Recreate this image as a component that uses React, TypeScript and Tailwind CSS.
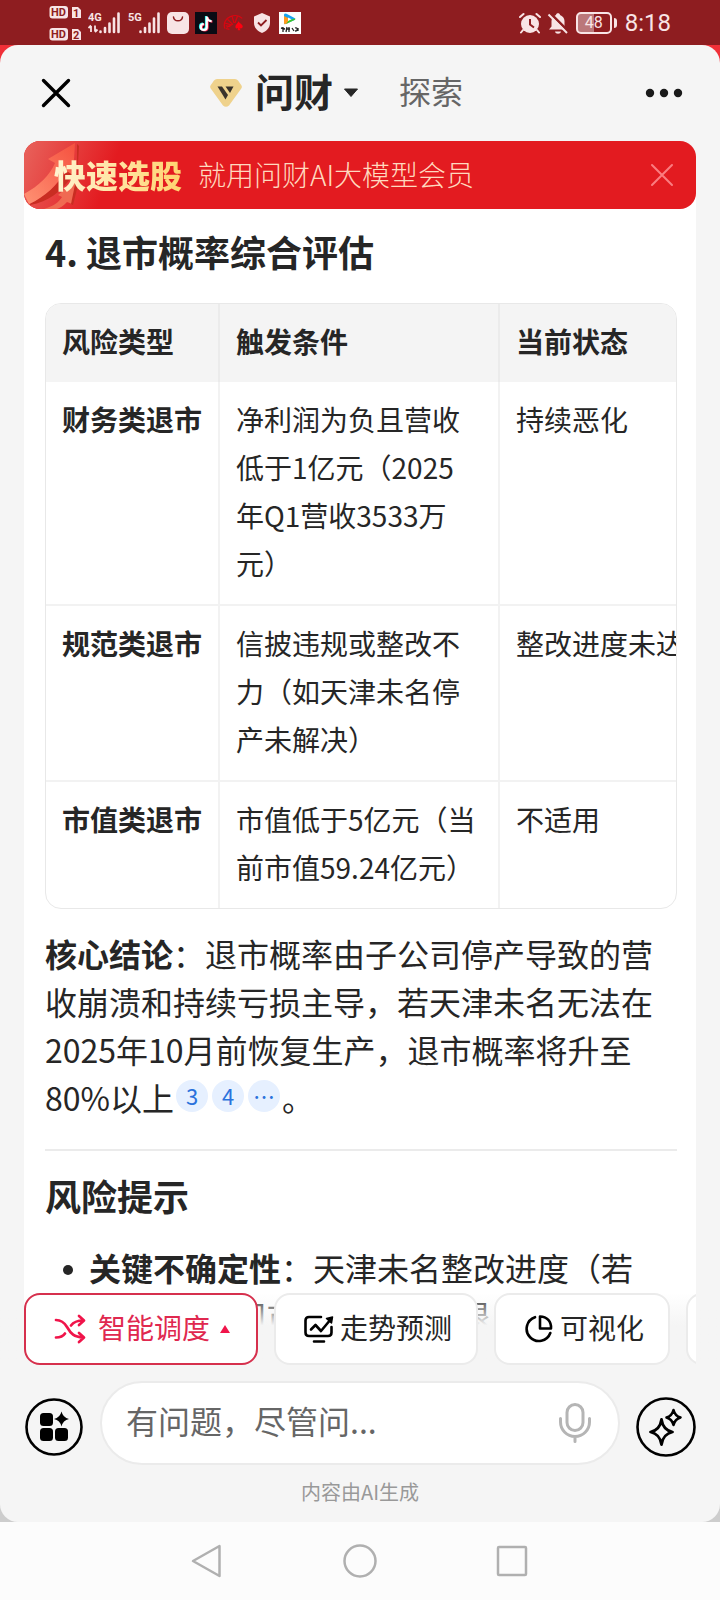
import type { ReactNode } from "react";

const RISK_ROWS = [
  {
    type: "财务类退市",
    condition: "净利润为负且营收低于1亿元（2025年Q1营收3533万元）",
    status: "持续恶化",
  },
  {
    type: "规范类退市",
    condition: "信披违规或整改不力（如天津未名停产未解决）",
    status: "整改进度未达标",
  },
  {
    type: "市值类退市",
    condition: "市值低于5亿元（当前市值59.24亿元）",
    status: "不适用",
  },
];

const CITATIONS = ["3", "4", "…"];

function Signal({ label, data }: { label: string; data?: boolean }) {
  return (
    <svg width="33" height="24" viewBox="0 0 33 24" fill="#f8e4e5" aria-hidden="true">
      <text x="0" y="10" fontSize="11" fontWeight="700" fontFamily="Roboto, sans-serif">
        {label}
      </text>
      {data && (
        <path
          d="M3 21v-6M3 14.500l-2.500 2.500M7 14.500v6M7 21l2.500-2.500"
          stroke="#f8e4e5"
          strokeWidth="1.800"
          fill="none"
        />
      )}
      <g stroke="#f8e4e5" strokeWidth="2.600" strokeLinecap="round">
        <path d="M12.500 20.500v.5M17 17v4M21.500 12.500v8.500M26 7.500v13.500M30.500 2.500v18.500" />
      </g>
    </svg>
  );
}

function StatusBar() {
  return (
    <div className="flex h-[45px] items-center justify-between bg-[#8e1d20] px-[49px] text-[#f8e4e5]">
      <div className="flex items-center">
        <svg width="33" height="36" viewBox="0 0 33 36" aria-hidden="true">
          <g fill="#f8e4e5">
            <rect x="0.500" y="1" width="18.500" height="12.500" rx="3" />
            <path d="M23 2h6l3 3v8h-9z" />
            <rect x="0.500" y="23" width="18.500" height="12.500" rx="3" />
            <path d="M23 24h6l3 3v8h-9z" />
          </g>
          <g fill="#8e1d20" fontFamily="Roboto, sans-serif" fontWeight="700" fontSize="11">
            <text x="2" y="11">HD</text>
            <text x="24" y="11.500">1</text>
            <text x="2" y="33">HD</text>
            <text x="24" y="33.500">2</text>
          </g>
        </svg>
        <div className="ml-[6px] flex items-center gap-[7px]">
          <Signal label="4G" data />
          <Signal label="5G" />
        </div>
        <div className="ml-[6px] flex items-center gap-[6px]">
          <svg width="22" height="22" viewBox="0 0 22 22" aria-hidden="true">
            <rect width="22" height="22" rx="5" fill="#f8e4e5" />
            <path d="M6.500 5c.5 5 8.500 5 9 0" stroke="#8e1d20" strokeWidth="1.500" fill="none" strokeLinecap="round" />
          </svg>
          <svg width="22" height="22" viewBox="0 0 22 22" fill="none" aria-hidden="true">
            <rect width="22" height="22" fill="#0a0b14" />
            <g strokeWidth="2.200">
              <path d="M11 4v10.500a3 3 0 1 1-3-3M11 4c.3 2.800 2 4.500 4.800 4.700" stroke="#25f4ee" />
              <path d="M12.600 5v10.500a3 3 0 1 1-3-3M12.600 5c.3 2.800 2 4.500 4.800 4.700" stroke="#fe2c55" />
              <path d="M11.800 4.500V15a3 3 0 1 1-3-3M11.800 4.500c.3 2.800 2 4.500 4.800 4.700" stroke="#fff" />
            </g>
          </svg>
          <svg width="22" height="20" viewBox="0 0 24 20" fill="none" aria-hidden="true">
            <path
              d="M2 16C0 10 3 5 8 3c5-2 10-1 13 2M4 15l7-4M2 10l7 2M5 6l5 5M10 3l2 7M16 2l-3 8M3 13l5 1M7 17l-4-1"
              stroke="#dc0510"
              strokeWidth="1.300"
            />
            <path d="M17 8c-1 2.500-3.500 3.500-3.500 6 0 1.800 1.800 2.600 3 1.300L16 18h3l-1-2.700c1.700 1.300 3.500.2 3.500-1.500 0-2.500-3.500-3.300-4.500-5.800z" fill="#ff0010" />
          </svg>
          <svg width="18" height="22" viewBox="0 0 18 22" fill="none" className="ml-[2px]" aria-hidden="true">
            <path d="M9 1l8 3.500V11c0 5-4 8.500-8 10-4-1.500-8-5-8-10V4.500z" fill="#f8e4e5" />
            <path d="M5 10.500l3 3 5.500-5.500" stroke="#8e1d20" strokeWidth="1.800" />
          </svg>
          <svg width="22" height="22" viewBox="0 0 22 22" className="ml-[2px]" aria-hidden="true">
            <rect width="22" height="22" fill="#fff" />
            <path d="M6 1.500q-1 0-1 1.500v8q0 1.500 1.500 1l9-4q1.500-1 0-2l-8-4.300z" fill="#18a4f2" />
            <path d="M5 4v7q0 1.500 1.500 1L9 11V6z" fill="#ff9a1f" />
            <path d="M7 12l8.500-4q1-.5.8-1.500L10 8z" fill="#3ec62c" />
            <path d="M9 5.500l3.500 1.700L9 9z" fill="#fff" />
            <path d="M2 16l4 1M4 15v5M8 15l-1 5M8 17h3M10 15v5M13 16l2 3M16 16c3-1 3 3 0 3M19 16v3" stroke="#222" strokeWidth="1.300" fill="none" />
          </svg>
        </div>
      </div>

      <div className="flex items-center">
        <svg width="22" height="22" viewBox="0 0 22 22" fill="none" aria-hidden="true">
          <circle cx="11" cy="12" r="9" fill="#f8e4e5" />
          <path d="M11 7v5.500l4 3" stroke="#8e1d20" strokeWidth="2" />
          <path d="M1 5l3.500-3M21 5l-3.500-3M4 18l-2 2.500M18 18l2 2.500" stroke="#f8e4e5" strokeWidth="2" strokeLinecap="round" />
        </svg>
        <svg width="22" height="22" viewBox="0 0 22 22" fill="none" className="ml-[6px]" aria-hidden="true">
          <path d="M2 17.500h18l-2.500-3V9c0-3-2-5-4.500-6 0-2.500-4-2.500-4 0C6.500 4 4.500 6 4.500 9v5.500z" fill="#f8e4e5" />
          <path d="M8 19.500h6c-.5 3-5.500 3-6 0z" fill="#f8e4e5" />
          <path d="M3 1l18 18" stroke="#8e1d20" strokeWidth="2.500" />
          <path d="M1.500 2.500L20 21" stroke="#f8e4e5" strokeWidth="2" />
        </svg>
        <div className="ml-[7px] flex h-[22px] w-[36px] items-center justify-center rounded-[5px] border-2 border-[#f8e4e5] bg-linear-to-r from-[#bb777a] from-50% to-[#8e1d20] to-50% font-[Roboto,sans-serif] text-[16px] leading-4">
          48
        </div>
        <span className="ml-[2px] h-[10px] w-[3px] rounded-r bg-[#f8e4e5]" />
        <time className="ml-[8px] font-[Roboto,sans-serif] text-[24px] leading-none">8:18</time>
      </div>
    </div>
  );
}

function Header() {
  return (
    <header className="flex h-24 items-center justify-between pr-9 pl-10">
      <button type="button" aria-label="关闭" className="flex w-20 items-center">
        <svg width="32" height="32" viewBox="0 0 32 32" fill="none" stroke="#000" strokeWidth="3.400" strokeLinecap="round">
          <path d="M3.500 3.500l25 25M28.500 3.500l-25 25" />
        </svg>
      </button>
      <nav className="flex items-center">
        <button type="button" className="flex items-center text-[39px] leading-[48px] font-bold text-[#262626]">
          <svg width="34" height="30" viewBox="0 0 34 30" className="mr-3" aria-hidden="true">
            <path d="M8 1h18q2 0 3 1.500l3.500 5q1 1.500-.2 3L20 27.500q-3 2.500-6 0L1.700 10.500q-1.200-1.500-.2-3L5 2.500Q6 1 8 1z" fill="#efd28c" />
            <path d="M8.500 8.500h4.500l6 8.500-2.500 4.500z" fill="#3a332b" />
            <path d="M16.500 8.500h8l-3.500 6.500z" fill="#3a332b" />
          </svg>
          <span className="pb-[6px]">问财</span>
          <svg width="16" height="10" viewBox="0 0 16 10" className="ml-[10px]" aria-hidden="true">
            <path d="M1.500 1h13L8 8.500z" fill="#262626" stroke="#262626" strokeLinejoin="round" />
          </svg>
        </button>
        <button type="button" className="ml-10 pb-[6px] text-[32px] leading-[48px] text-[#666]">
          探索
        </button>
      </nav>
      <button type="button" aria-label="更多" className="flex w-33 justify-end">
        <svg width="44" height="12" viewBox="0 0 44 12" fill="#1a1a1a">
          <circle cx="10" cy="6" r="4.200" />
          <circle cx="24" cy="6" r="4.200" />
          <circle cx="38" cy="6" r="4.200" />
        </svg>
      </button>
    </header>
  );
}

function Banner() {
  return (
    <div className="mx-6 bg-linear-to-b from-[#f5f5f5] from-50% to-white to-50%">
      <div className="relative flex h-17 items-center overflow-hidden rounded-2xl bg-[#e31b20] pr-[22px] pl-[30px]">
        <svg width="110" height="68" viewBox="0 0 110 68" className="absolute top-0 left-0" aria-hidden="true">
          <defs>
            <linearGradient id="glow" x1="0" y1="0" x2="0.850" y2="0.200">
              <stop offset="0" stopColor="#e8635c" />
              <stop offset="1" stopColor="#e31b20" />
            </linearGradient>
            <linearGradient id="arrow" x1="0" y1="1" x2="1" y2="0">
              <stop offset="0" stopColor="#ff9274" />
              <stop offset="1" stopColor="#f5513f" />
            </linearGradient>
          </defs>
          <rect width="110" height="68" fill="url(#glow)" />
          <path d="M6 63C25 52 38 40 44 26l9 8V3l2 2-2 36-6-4C37 50 25 61 6 64z" fill="#c92d22" />
          <path d="M0 53c15-8 26-19 31-31l-7-4L51 2l-2 32-8-5C34 44 21 56 5 63z" fill="url(#arrow)" />
          <path d="M20 68c10-3 15-7 18-12l-4-2 18-15-4 24-5-2c-4 4-7 6-10 7z" fill="#f06a52" />
          <path d="M52 39l3 1-6 24-2-1z" fill="#c92d22" />
        </svg>
        <strong className="relative bg-linear-to-r from-[#fff3cf] to-[#ffd36e] bg-clip-text pb-[2px] text-[32px] leading-[48px] font-black text-transparent">
          快速选股
        </strong>
        <span className="ml-4 flex-1 pb-[2px] text-[28px] leading-[48px] font-light text-[#ffd9bf]">就用问财AI大模型会员</span>
        <button type="button" aria-label="关闭横幅">
          <svg width="24" height="24" viewBox="0 0 24 24" fill="none" stroke="#fb7d80" strokeWidth="2" strokeLinecap="round">
            <path d="M2 2l20 20M22 2L2 22" />
          </svg>
        </button>
      </div>
    </div>
  );
}

function RiskTable() {
  return (
    <div className="mt-7 overflow-x-auto rounded-2xl border border-[#e8e8e8] [scrollbar-width:none]">
      <table className="w-max border-separate border-spacing-0 text-left text-[28px] leading-[48px]">
        <thead className="bg-[#f4f4f4]">
          <tr>
            <th className="border-r-2 border-[#ebebeb] px-4 pt-[13px] pb-[17px] font-bold">风险类型</th>
            <th className="border-r-2 border-[#ebebeb] px-4 pt-[13px] pb-[17px] font-bold">触发条件</th>
            <th className="px-4 pt-[13px] pb-[17px] font-bold">当前状态</th>
          </tr>
        </thead>
        <tbody className="[&>tr+tr>*]:border-t-2">
          {RISK_ROWS.map((row) => (
            <tr key={row.type} className="align-top">
              <th className="border-r-2 border-[#f2f2f2] px-4 pt-[13px] pb-[17px] font-bold whitespace-nowrap">
                {row.type}
              </th>
              <td className="w-[280px] max-w-[280px] border-r-2 border-[#f2f2f2] pt-[13px] pr-5 pb-[17px] pl-4">
                {row.condition}
              </td>
              <td className="border-[#f2f2f2] px-4 pt-[13px] pb-[17px] whitespace-nowrap">{row.status}</td>
            </tr>
          ))}
        </tbody>
      </table>
    </div>
  );
}

function Answer() {
  return (
    <main className="mx-6 flex-1 bg-white pt-[18px] pr-[19px] pl-[21px]">
      <h2 className="text-[36px] leading-[48px] font-bold">4. 退市概率综合评估</h2>
      <RiskTable />
      <p className="mt-5 text-[32px] leading-[48px]">
        <strong className="font-bold">核心结论</strong>
        ：退市概率由子公司停产导致的营收崩溃和持续亏损主导，若天津未名无法在2025年10月前恢复生产，退市概率将升至80%以上
        <span className="mx-[2px] inline-flex gap-1 align-[6px]">
          {CITATIONS.map((c) => (
            <a
              key={c}
              href="#sources"
              className="flex size-8 items-center justify-center rounded-full bg-[#e6f0ff] pb-[2px] text-[22px] leading-[30px] text-[#2a72dc]"
            >
              {c}
            </a>
          ))}
        </span>
        。
      </p>
      <hr className="mt-7 border-t-2 border-[#ebebeb]" />
      <h2 className="mt-5 text-[36px] leading-[48px] font-bold">风险提示</h2>
      <ul className="mt-6 pb-[2px] text-[32px] leading-[48px]">
        <li className="flex pr-8">
          <span className="mt-[22px] mr-4 ml-[18px] size-[10px] shrink-0 rounded-full bg-[#262626]" />
          <span>
            <strong className="font-bold">关键不确定性</strong>
            ：天津未名整改进度（若8月底，公司市值或触发强退
          </span>
        </li>
      </ul>
    </main>
  );
}

function Chip({ icon, label }: { icon: ReactNode; label: string }) {
  return (
    <button
      type="button"
      className="flex h-18 shrink-0 items-center gap-[6px] rounded-2xl border-2 border-[#ebebeb] bg-white pr-6 pl-7 text-[28px] leading-10 whitespace-nowrap"
    >
      {icon}
      <span className="pb-1">{label}</span>
    </button>
  );
}

function Chips() {
  return (
    <div className="relative -mt-12 bg-linear-to-b from-[#f5f5f5]/0 to-[#f5f5f5] to-45% px-6">
      <div className="flex gap-4 overflow-hidden">
        <button
          type="button"
          className="flex h-18 shrink-0 items-center rounded-2xl border-2 border-[#d6304d] bg-white pr-[26px] pl-7 text-[28px] leading-10 whitespace-nowrap text-[#e0284f]"
        >
          <svg width="32" height="30" viewBox="0 0 32 30" fill="none" stroke="#f0144a" strokeWidth="2.700" strokeLinecap="round" strokeLinejoin="round" aria-hidden="true">
            <path d="M2 6c5 0 8 2 11 7 4 7 7 10 16 10.500M2 23.500c4 0 7-1 9-4M17 11.500c3-4 6-5 12-5M25 2l5 4.500-5 4.500M25 19l5 4.500-5 4.500" />
          </svg>
          <span className="mr-[10px] ml-3 pb-1">智能调度</span>
          <svg width="10" height="8" viewBox="0 0 10 8" aria-hidden="true">
            <path d="M5 0l5 8H0z" fill="#f0144a" />
          </svg>
        </button>
        <Chip
          label="走势预测"
          icon={
            <svg width="30" height="30" viewBox="0 0 30 30" fill="none" stroke="#000" strokeWidth="2.600" strokeLinecap="round" strokeLinejoin="round" aria-hidden="true">
              <path d="M17 3H5Q1.500 3 1.500 6.500v12Q1.500 22 5 22h19q3.500 0 3.500-3.500V13M10 27.500h10" />
              <path d="M7 15.500l4.500-4.500 5.500 6L27 5" />
              <path d="M22.500 4.500L28.500 3l-1 6z" fill="#000" strokeWidth="1.500" />
            </svg>
          }
        />
        <Chip
          label="可视化"
          icon={
            <svg width="30" height="30" viewBox="0 0 30 30" fill="none" stroke="#000" strokeWidth="2.600" strokeLinecap="round" strokeLinejoin="round" aria-hidden="true">
              <path d="M11 3.200A12.200 12.200 0 1 0 26.300 19" />
              <path d="M16 2.500v12h11C27.500 7.500 23 2.500 16 2.500z" />
            </svg>
          }
        />
        <button
          type="button"
          aria-label="更多"
          className="h-18 w-30 shrink-0 rounded-2xl border-2 border-[#ebebeb] bg-white"
        />
      </div>
    </div>
  );
}

function Composer() {
  return (
    <div className="mt-4 flex items-center px-6">
      <button type="button" aria-label="功能" className="mt-2">
        <svg width="60" height="60" viewBox="0 0 60 60" aria-hidden="true">
          <circle cx="30" cy="30" r="27.500" fill="none" stroke="#000" strokeWidth="2.600" />
          <rect x="16" y="16" width="13" height="13" rx="3.500" />
          <rect x="16" y="31" width="13" height="13" rx="3.500" />
          <rect x="31" y="31" width="13" height="13" rx="3.500" />
          <path d="M37.500 14.500q1.400 6.100 7.500 7.500-6.100 1.400-7.500 7.500-1.400-6.100-7.500-7.500 6.100-1.400 7.500-7.500z" />
        </svg>
      </button>
      <div className="mx-4 flex h-21 min-w-0 flex-1 items-center rounded-full border-2 border-[#ebebeb] bg-white pr-[26px] pl-6">
        <input
          type="text"
          aria-label="提问"
          placeholder="有问题，尽管问..."
          className="min-w-0 flex-1 pb-[6px] text-[32px] leading-[48px] outline-none placeholder:text-[#666]"
        />
        <button type="button" aria-label="语音输入">
          <svg width="34" height="42" viewBox="0 0 34 42" fill="none" stroke="#b5b5b5" strokeWidth="3" strokeLinecap="round">
            <rect x="9" y="2.500" width="16" height="26" rx="8" />
            <path d="M2.500 16.500v3.500a14.500 14.500 0 0 0 29 0v-3.500M17 35v4.500" />
          </svg>
        </button>
      </div>
      <button type="button" aria-label="灵感" className="mt-2">
        <svg width="60" height="60" viewBox="0 0 60 60" fill="none" stroke="#000" aria-hidden="true">
          <circle cx="30" cy="30" r="28.500" strokeWidth="2.600" />
          <path
            d="M25.500 22.500q1.500 10.500 11 12.500-9.500 2-11 12.500-1.500-10.500-11-12.500 9.500-2 11-12.500z"
            strokeWidth="2.800"
            strokeLinejoin="round"
          />
          <path
            d="M37.500 13q1.500 6 7 7.500-5.500 1.500-7 7.500-1.500-6-7-7.500 5.500-1.500 7-7.500z"
            strokeWidth="2.600"
            strokeLinejoin="round"
          />
        </svg>
      </button>
    </div>
  );
}

function SystemNav() {
  return (
    <nav className="flex h-[78px] items-center justify-center gap-[119px] bg-[#fcfcfc]">
      <button type="button" aria-label="返回">
        <svg width="34" height="36" viewBox="0 0 34 36" fill="none" stroke="#b0b0b0" strokeWidth="2.500" strokeLinejoin="round">
          <path d="M29.500 3v30L3 18z" />
        </svg>
      </button>
      <button type="button" aria-label="主页">
        <svg width="34" height="36" viewBox="0 0 34 36" fill="none" stroke="#b0b0b0" strokeWidth="2.500">
          <circle cx="17" cy="18" r="15.500" />
        </svg>
      </button>
      <button type="button" aria-label="最近任务">
        <svg width="34" height="36" viewBox="0 0 34 36" fill="none" stroke="#b0b0b0" strokeWidth="2.500" strokeLinejoin="round">
          <rect x="2" y="4" width="28" height="28" rx="1" />
        </svg>
      </button>
    </nav>
  );
}

export default function App() {
  return (
    <div className="flex min-h-screen flex-col font-['Noto_Sans_CJK_SC',sans-serif] text-[#262626]">
      <StatusBar />
      <div className="flex flex-1 flex-col bg-linear-to-b from-[#f03038] from-50% to-[#cdcdcd] to-50%">
        <div className="flex flex-1 flex-col rounded-[18px] bg-[#f5f5f5]">
          <Header />
          <Banner />
          <Answer />
          <Chips />
          <Composer />
          <p className="pt-[13px] pb-4 text-center text-[20px] leading-7 text-[#999]">内容由AI生成</p>
        </div>
      </div>
      <SystemNav />
    </div>
  );
}
